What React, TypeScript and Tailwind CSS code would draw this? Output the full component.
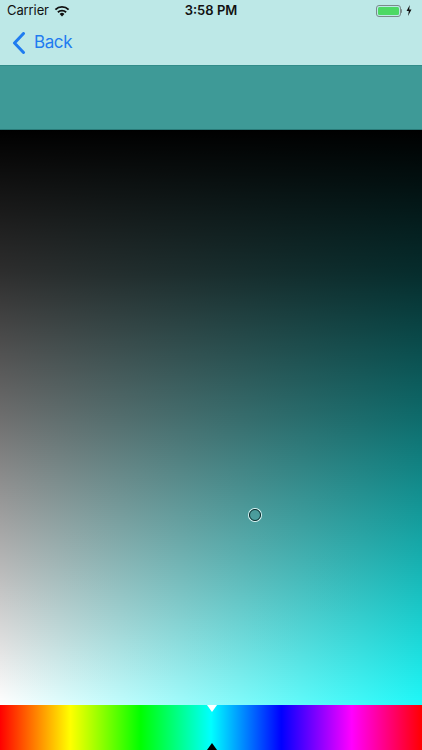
import React from "react";

function Wifi() {
  return (
    <svg width="16" height="12" viewBox="0 0 16 12" className="ml-[5px]">
      <path d="M8 11.5 L5.6 9 A3.4 3.4 0 0 1 10.4 9 Z" fill="#111" />
      <path d="M3.9 7.3 A5.9 5.9 0 0 1 12.1 7.3" fill="none" stroke="#111" strokeWidth="1.9" />
      <path d="M1.4 4.6 A9.4 9.4 0 0 1 14.6 4.6" fill="none" stroke="#111" strokeWidth="1.9" />
    </svg>
  );
}

function Battery() {
  return (
    <div className="flex items-center">
      <div className="w-[25px] h-[12px] rounded-[3px] border border-[#7a8a8a] p-[1px]">
        <div className="w-full h-full rounded-[1.5px] bg-[#4cd964]" />
      </div>
      <div className="w-[1.5px] h-[4px] bg-[#7a8a8a] rounded-r-sm" />
      <svg width="6" height="11" viewBox="0 0 6 11" className="ml-[4px]">
        <path d="M3.8 0 L0.5 6 L2.8 6 L2 11 L5.5 4.6 L3.2 4.6 Z" fill="#111" />
      </svg>
    </div>
  );
}

export default function App() {
  return (
    <div
      className="w-[422px] h-[750px] overflow-hidden flex flex-col bg-black"
      style={{ fontFamily: "Inter, 'Liberation Sans', sans-serif" }}
    >
      {/* Status + nav */}
      <div className="bg-[#bde8e7] h-[65px] flex flex-col">
        <div className="h-[21px] flex items-center justify-between px-[7px] relative">
          <div className="flex items-center text-[13px] text-[#111] tracking-[-0.1px]">
            Carrier
            <Wifi />
          </div>
          <div className="absolute left-0 right-0 top-0 h-[21px] flex items-center justify-center text-[13px] font-semibold text-[#111]">
            3:58 PM
          </div>
          <div className="pr-[3px]">
            <Battery />
          </div>
        </div>
        <div className="flex-1 flex items-center pl-[12px] pb-[1px]">
          <svg width="14" height="22" viewBox="0 0 14 22">
            <path d="M11.5 1.5 L2.5 11 L11.5 20.5" fill="none" stroke="#1f7cf0" strokeWidth="3" strokeLinecap="round" strokeLinejoin="round" />
          </svg>
          <span className="ml-[8px] text-[17px] tracking-[-0.4px] text-[#1f7cf0] leading-none">Back</span>
        </div>
      </div>
      {/* Swatch */}
      <div className="h-[65px] bg-[#3e9a97] border-t border-t-[#318c89] border-b border-b-[#2a7a78]" />
      {/* SV square */}
      <div className="relative h-[575px] bg-[linear-gradient(to_bottom,rgba(0,0,0,1)_0%,rgba(0,0,0,0.82)_25%,rgba(0,0,0,0.57)_50%,rgba(0,0,0,0.29)_75%,rgba(0,0,0,0)_100%),linear-gradient(to_right,#ffffff,#1ff8f8)]">
        <div className="absolute left-[249px] top-[379px] w-[12px] h-[12px] rounded-full border-[1.5px] border-[#0b2b2b] ring-1 ring-[#dff5f5]" />
      </div>
      {/* Hue bar */}
      <div className="relative flex-1 bg-[linear-gradient(to_right,#ff0000,#ffff00,#00ff00,#00ffff,#0000ff,#ff00ff,#ff0000)]">
        <div className="absolute left-[207px] top-0 w-0 h-0 border-l-[5px] border-r-[5px] border-t-[7px] border-l-transparent border-r-transparent border-t-white" />
        <div className="absolute left-[207px] bottom-0 w-0 h-0 border-l-[5px] border-r-[5px] border-b-[7px] border-l-transparent border-r-transparent border-b-black" />
      </div>
    </div>
  );
}
